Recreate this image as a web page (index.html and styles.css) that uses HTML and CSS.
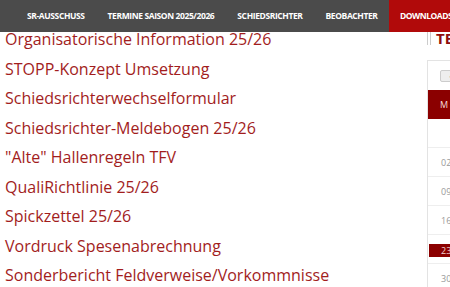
FILE: index.html
```html
<!DOCTYPE html>
<html lang="de">
<head>
    <meta charset="UTF-8">
    <meta name="viewport" content="width=device-width, initial-scale=1.0">
    <title>Downloads</title>
    <link rel="stylesheet" href="styles.css">
</head>
<body>
    <nav class="topnav">
        <a href="#" class="nav-item">SR-Ausschuss</a>
        <a href="#" class="nav-item">Termine Saison 2025/2026</a>
        <a href="#" class="nav-item">Schiedsrichter</a>
        <a href="#" class="nav-item">Beobachter</a>
        <a href="#" class="nav-item active">Downloads</a>
    </nav>

    <div class="page">
        <ul class="downloads">
            <li><a href="#">Organisatorische Information 25/26</a></li>
            <li><a href="#">STOPP-Konzept Umsetzung</a></li>
            <li><a href="#">Schiedsrichterwechselformular</a></li>
            <li><a href="#">Schiedsrichter-Meldebogen 25/26</a></li>
            <li><a href="#">"Alte" Hallenregeln TFV</a></li>
            <li><a href="#">QualiRichtlinie 25/26</a></li>
            <li><a href="#">Spickzettel 25/26</a></li>
            <li><a href="#">Vordruck Spesenabrechnung</a></li>
            <li><a href="#">Sonderbericht Feldverweise/Vorkommnisse</a></li>
        </ul>

        <aside class="sidebar">
            <h3 class="widget-title">Termine</h3>
            <div class="calendar">
                <div class="cal-nav"><button class="cal-btn">&lsaquo;</button></div>
                <div class="cal-head">M</div>
                <div class="cal-row"></div>
                <div class="cal-row"><span>02</span></div>
                <div class="cal-row"><span>09</span></div>
                <div class="cal-row"><span>16</span></div>
                <div class="cal-row"><span class="today">23</span></div>
                <div class="cal-row"><span>30</span></div>
            </div>
        </aside>
    </div>
</body>
</html>
```

FILE: styles.css
```css
body {
    margin: 0;
    font-family: "Open Sans", sans-serif;
    background: #fff;
    overflow: hidden;
}
.topnav {
    position: fixed;
    top: 0;
    left: 0;
    right: 0;
    z-index: 2;
    height: 32px;
    background-color: #4b4b4b;
    display: flex;
    padding-left: 15.5px;
    white-space: nowrap;
}
.nav-item {
    display: flex;
    align-items: center;
    padding: 0 11.5px 2px;
    color: #fff;
    font-size: 8.5px;
    font-weight: bold;
    letter-spacing: -0.4px;
    text-transform: uppercase;
    text-decoration: none;
}
.nav-item.active {
    background-color: #b10a0a;
    padding: 0 12px 2px 11px;
    letter-spacing: -0.5px;
}
.page {
    display: flex;
    padding-top: 25px;
}
.downloads {
    list-style: none;
    margin: 0;
    padding: 0 0 0 5px;
    width: 422px;
    flex-shrink: 0;
}
.downloads li {
    font-size: 16px;
    line-height: 29.5px;
    white-space: nowrap;
}
.downloads a {
    color: #a21d1d;
    text-decoration: none;
}
.sidebar {
    width: 200px;
    flex-shrink: 0;
}
.widget-title {
    margin: 7px 0 15px;
    border-left: 4px double #ccc;
    padding-left: 5px;
    font-size: 15px;
    line-height: 13px;
    color: #8f0e0e;
    text-transform: uppercase;
    font-weight: bold;
}
.calendar {
    border: 1px solid #e3e3e3;
}
.cal-nav {
    padding: 9px 0 8px 12px;
}
.cal-btn {
    display: block;
    width: 22px;
    height: 12px;
    padding: 0;
    border: 1px solid #ccc;
    border-radius: 2px;
    background: #eee;
    color: #888;
    font-size: 10px;
    line-height: 9px;
}
.cal-head {
    height: 29px;
    background-color: #8b0000;
    color: #f6dada;
    font-size: 9px;
    line-height: 29px;
    padding-left: 12px;
}
.cal-row {
    height: 28px;
    border-bottom: 1px solid #eee;
    font-size: 9px;
    color: #999;
    padding-left: 13px;
}
.cal-row span {
    display: inline-block;
    margin-top: 8px;
    line-height: 13px;
}
.cal-row .today {
    margin-top: 9px;
    background-color: #8b0000;
    color: #f3d0d0;
    margin-left: -12px;
    padding-left: 12px;
    width: 40px;
}
```
